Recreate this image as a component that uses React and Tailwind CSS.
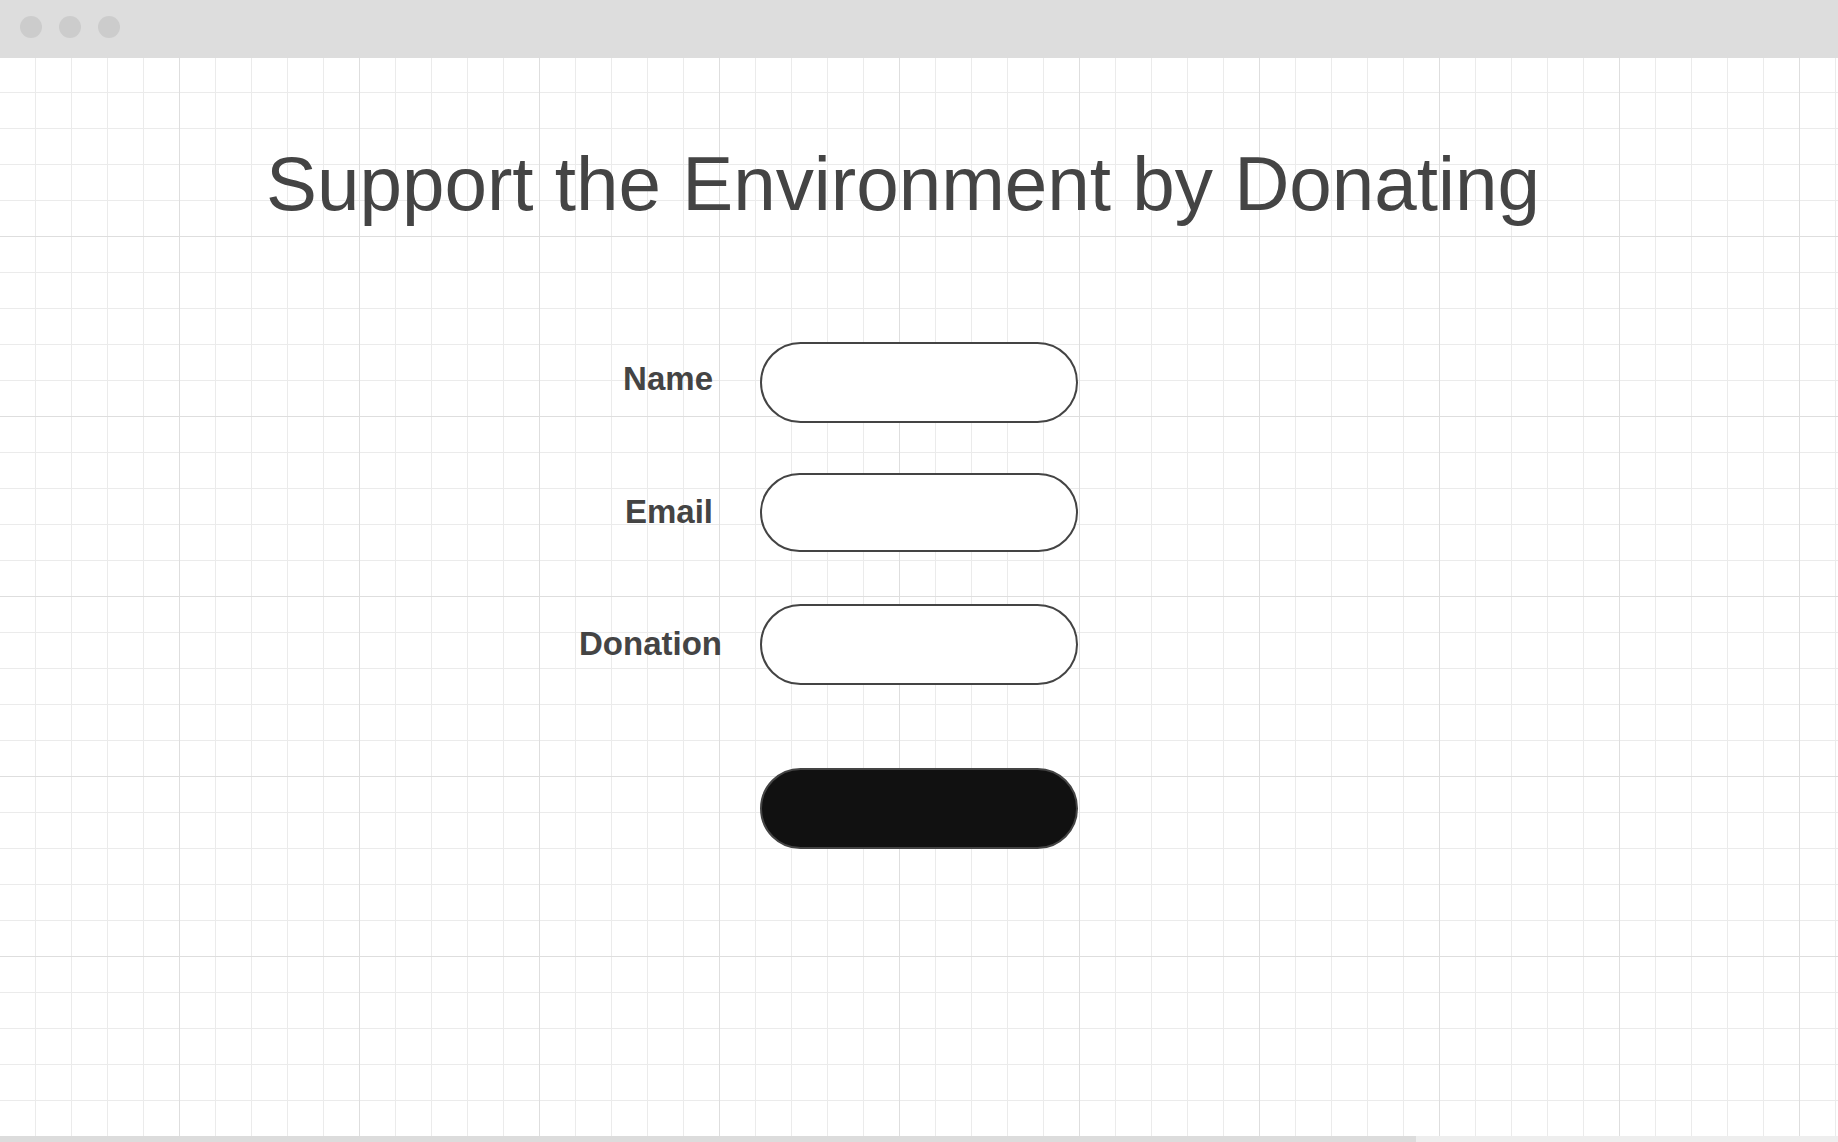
import React from "react";

export default function App() {
  const rows = [
    { label: "Name", row: "", input: "h-[81px]", lab: "mb-[8px]" },
    { label: "Email", row: "mt-[50px]", input: "h-[79px]", lab: "mb-[2px]" },
    { label: "Donation", row: "mt-[52px]", input: "h-[81px]", lab: "mb-[3px]" },
  ];
  return (
    <div className="w-[1838px] h-[1142px] flex flex-col overflow-hidden bg-white font-['Liberation_Sans',Arial,sans-serif]">
      <div className="h-[58px] shrink-0 bg-[#dddddd] flex items-start gap-[17px] pl-[20px] pt-[16px]">
        <span className="w-[22px] h-[22px] rounded-full bg-[#cccccc]" />
        <span className="w-[22px] h-[22px] rounded-full bg-[#cccccc]" />
        <span className="w-[22px] h-[22px] rounded-full bg-[#cccccc]" />
      </div>
      <div className="flex-1 flex flex-col bg-white bg-[linear-gradient(to_right,#dedede_1px,transparent_1px),linear-gradient(to_bottom,#dedede_1px,transparent_1px),linear-gradient(to_right,#ebebeb_1px,transparent_1px),linear-gradient(to_bottom,#ebebeb_1px,transparent_1px)] bg-[size:180px_180px,180px_180px,36px_36px,36px_36px] bg-[position:-1px_-2px]">
        <h1 className="pt-[88px] pl-[266px] text-[76.4px] leading-[76px] font-normal text-[#444444] whitespace-nowrap">
          Support the Environment by Donating
        </h1>
        <div className="mt-[120px] flex flex-col">
          {rows.map((r) => (
            <div key={r.label} className={"flex items-center gap-[47px] pl-[579px] " + r.row}>
              <label
                className={
                  "w-[134px] text-right text-[33px] leading-none font-bold text-[#444444] whitespace-nowrap " +
                  r.lab
                }
              >
                {r.label}
              </label>
              <input
                type="text"
                className={"w-[318px] rounded-full border-2 border-[#444444] bg-white outline-none " + r.input}
              />
            </div>
          ))}
          <div className="flex items-center gap-[47px] pl-[579px] mt-[83px]">
            <div className="w-[134px]" />
            <button className="w-[318px] h-[81px] rounded-full border-2 border-[#444444] bg-[#111111]" />
          </div>
        </div>
      </div>
      <div className="h-[6px] shrink-0 bg-[#eeeeee] flex">
        <div className="w-[1416px] h-full bg-[#dcdcdc]" />
      </div>
    </div>
  );
}
